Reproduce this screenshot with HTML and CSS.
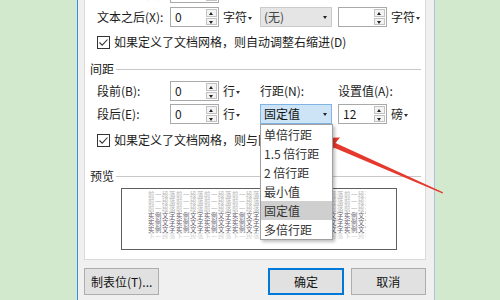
FILE: index.html
```html
<!DOCTYPE html>
<html>
<head>
    <meta charset="utf-8">
    <title>段落</title>
    <link rel="stylesheet" href="styles.css">
</head>
<body>
<div class="stage">
    <div class="dialog">
        <div class="panel">
            <div class="grid indent">
                <span>文本之前(R):</span>
                <div class="spin"><span class="val">0</span><span class="arrows"><i class="up"></i><i class="down"></i></span></div>
                <span class="unit">字符<b class="caret"></b></span>
                <span class="top-label">特殊(S):</span>
                <span class="top-label">缩进值(Y):</span>
                <span></span>

                <span>文本之后(X):</span>
                <div class="spin"><span class="val">0</span><span class="arrows"><i class="up"></i><i class="down"></i></span></div>
                <span class="unit">字符<b class="caret"></b></span>
                <div class="select disabled">(无)<b class="drop"></b></div>
                <div class="spin"><span class="val"></span><span class="arrows"><i class="up"></i><i class="down"></i></span></div>
                <span class="unit">字符<b class="caret"></b></span>
            </div>

            <div class="check-row check-first">
                <span class="checkbox"><svg width="11" height="11" viewBox="0 0 11 11"><polyline points="1.5,5.5 4.2,8.2 9.5,2.5" fill="none" stroke="#333" stroke-width="1.1"/></svg></span>
                <span>如果定义了文档网格，则自动调整右缩进(D)</span>
            </div>

            <div class="section section-spacing">间距</div>

            <div class="grid spacing">
                <span>段前(B):</span>
                <div class="spin"><span class="val">0</span><span class="arrows"><i class="up"></i><i class="down"></i></span></div>
                <span class="unit">行<b class="caret"></b></span>
                <span>行距(N):</span>
                <span>设置值(A):</span>
                <span></span>

                <span>段后(E):</span>
                <div class="spin"><span class="val">0</span><span class="arrows"><i class="up"></i><i class="down"></i></span></div>
                <span class="unit">行<b class="caret"></b></span>
                <div class="select-wrap">
                    <div class="select active">固定值<b class="drop"></b></div>
                    <ul class="menu">
                        <li>单倍行距</li>
                        <li>1.5 倍行距</li>
                        <li>2 倍行距</li>
                        <li>最小值</li>
                        <li class="current">固定值</li>
                        <li>多倍行距</li>
                    </ul>
                </div>
                <div class="spin"><span class="val">12</span><span class="arrows"><i class="up"></i><i class="down"></i></span></div>
                <span class="unit">磅<b class="caret"></b></span>
            </div>

            <div class="check-row check-second">
                <span class="checkbox"><svg width="11" height="11" viewBox="0 0 11 11"><polyline points="1.5,5.5 4.2,8.2 9.5,2.5" fill="none" stroke="#333" stroke-width="1.1"/></svg></span>
                <span>如果定义了文档网格，则与网格对齐(W)</span>
            </div>

            <div class="section section-preview">预览</div>

            <div class="preview">
                <div class="preview-text">
                    <div class="preview-lines">
                        <div class="prev">前一段落前一段落前一段落前一段落前一段落前一段落前一段落前一段落</div>
                        <div class="prev">前一段落前一段落前一段落前一段落前一段落前一段落前一段落前一段落</div>
                        <div class="prev">前一段落前一段落前一段落前一段落前一段落前一段落前一段落前一段落</div>
                        <div class="sample">实例文字实例文字实例文字实例文字实例文字实例文字实例文字实例文字</div>
                        <div class="sample">实例文字实例文字实例文字实例文字实例文字实例文字实例文字实例文字</div>
                        <div class="sample">实例文字实例文字实例文字实例文字实例文字实例文字实例文字实例文字</div>
                        <div class="next">下一段落下一段落下一段落下一段落下一段落下一段落下一段落下一段落</div>
                    </div>
                </div>
            </div>
        </div>

        <div class="buttons">
            <button class="btn">制表位(T)...</button>
            <button class="btn btn-ok">确定</button>
            <button class="btn btn-cancel">取消</button>
        </div>
    </div>

    <svg class="arrow" width="500" height="300" viewBox="0 0 500 300">
        <polygon points="318,138 340,137.5 335.5,143 443,192.2 442.6,193.4 333.5,147.5 332.5,154.5" fill="#e5392d"/>
    </svg>
</div>
</body>
</html>
```

FILE: styles.css
```css
body {
    margin: 0;
    background: #d3e9cd;
    font-family: "Noto Sans CJK SC", "Microsoft YaHei", sans-serif;
    font-size: 12px;
    color: #1b1b1b;
    overflow: hidden;
}
.stage {
    position: relative;
    width: 500px;
    height: 300px;
    overflow: hidden;
}
.dialog {
    box-sizing: border-box;
    width: 358px;
    height: 300px;
    margin-left: 77px;
    padding: 0 8px 0 6px;
    background: #f0f0f0;
    border-left: 1px solid #3d8ee0;
    border-right: 1px solid #a8c3de;
    display: flex;
    flex-direction: column;
}
.panel {
    flex: none;
    margin-top: -22px;
    padding: 4px 4px 9px 5px;
    background: #fff;
    border: 1px solid #dadada;
}
.grid {
    display: grid;
    grid-template-columns: 73px 52px 38px 78px 52px auto;
    grid-auto-rows: 20px;
    align-items: center;
    line-height: 20px;
    white-space: nowrap;
    margin-left: 7px;
}
.indent {
    row-gap: 4px;
}
.top-label {
    margin-top: -4px;
}
.spacing {
    row-gap: 3px;
    margin-top: 4px;
}
.spin {
    box-sizing: border-box;
    width: 49px;
    height: 20px;
    border: 1px solid #a9a9a9;
    background: #fff;
    display: flex;
}
.spin .val {
    flex: 1;
    padding-left: 4px;
    line-height: 18px;
}
.arrows {
    width: 11px;
    margin: 1px 1px 1px 0;
    display: flex;
    flex-direction: column;
    gap: 1px;
}
.arrows i {
    flex: 1;
    box-sizing: border-box;
    border: 1px solid #c2c2c2;
    background: #f3f3f3;
    position: relative;
}
.arrows i::after {
    content: "";
    position: absolute;
    left: 2px;
    top: 2px;
    border-left: 2.5px solid transparent;
    border-right: 2.5px solid transparent;
}
.arrows .up::after {
    border-bottom: 3px solid #222;
}
.arrows .down::after {
    border-top: 3px solid #222;
}
.unit {
    padding-left: 1px;
}
.caret {
    display: inline-block;
    vertical-align: middle;
    margin-left: 1px;
    border-left: 2px solid transparent;
    border-right: 2px solid transparent;
    border-top: 3px solid #333;
}
.select {
    box-sizing: border-box;
    width: 72px;
    height: 20px;
    padding-left: 3px;
    line-height: 18px;
    position: relative;
}
.select.disabled {
    background: #e5e5e5;
    border: 1px solid #cacaca;
    color: #444;
}
.select.active {
    background: #cde4f7;
    border: 1px solid #7fb4e4;
    color: #111;
}
.drop {
    position: absolute;
    right: 4px;
    top: 8px;
    border-left: 2.5px solid transparent;
    border-right: 2.5px solid transparent;
    border-top: 3px solid #222;
}
.select-wrap {
    position: relative;
    height: 20px;
}
.menu {
    position: absolute;
    z-index: 2;
    top: 20px;
    left: 0;
    width: 73px;
    box-sizing: border-box;
    margin: 0;
    padding: 0;
    list-style: none;
    background: #fff;
    border: 1px solid #a0a0a0;
    box-shadow: 2px 2px 3px rgba(0, 0, 0, 0.25);
}
.menu li {
    height: 19px;
    line-height: 19px;
    padding-left: 3px;
    color: #333;
}
.menu li.current {
    background: #cfcfcf;
}
.check-row {
    display: flex;
    align-items: center;
    gap: 4px;
    height: 16px;
    line-height: 16px;
    margin-left: 7px;
    white-space: nowrap;
}
.check-first {
    margin-top: 7px;
}
.check-second {
    margin-top: 8px;
}
.checkbox {
    box-sizing: border-box;
    width: 13px;
    height: 13px;
    border: 1px solid #333;
    display: flex;
    align-items: center;
    justify-content: center;
}
.section {
    display: flex;
    align-items: center;
    height: 16px;
    line-height: 16px;
}
.section::after {
    content: "";
    flex: 1;
    border-top: 1px solid #c8c8c8;
    margin-left: 2px;
}
.section-spacing {
    margin-top: 11px;
}
.section-preview {
    margin-top: 20px;
}
.preview {
    box-sizing: border-box;
    width: 276px;
    height: 62px;
    margin: 4px 0 0 31px;
    padding: 2px 0 0 26px;
    border: 1px solid #5f5f5f;
    background: #fff;
}
.preview-text {
    width: 218px;
    height: 48px;
    overflow: hidden;
}
.preview-lines {
    width: 374px;
    font-size: 11px;
    line-height: 12px;
    letter-spacing: 1px;
    white-space: nowrap;
    transform: scale(0.5834);
    transform-origin: 0 0;
}
.prev {
    color: #b4b4b4;
}
.sample {
    color: #6a5f70;
}
.next {
    color: #d4d4d4;
}
.buttons {
    display: flex;
    margin-top: 8px;
}
.btn {
    box-sizing: border-box;
    width: 76px;
    height: 27px;
    padding: 0;
    font: inherit;
    color: #111;
    background: #e1e1e1;
    border: 1px solid #adadad;
}
.btn-ok {
    margin-left: 109px;
    border: 2px solid #0078d7;
}
.btn-cancel {
    margin-left: 7px;
}
.arrow {
    position: absolute;
    left: 0;
    top: 0;
    pointer-events: none;
}
```
